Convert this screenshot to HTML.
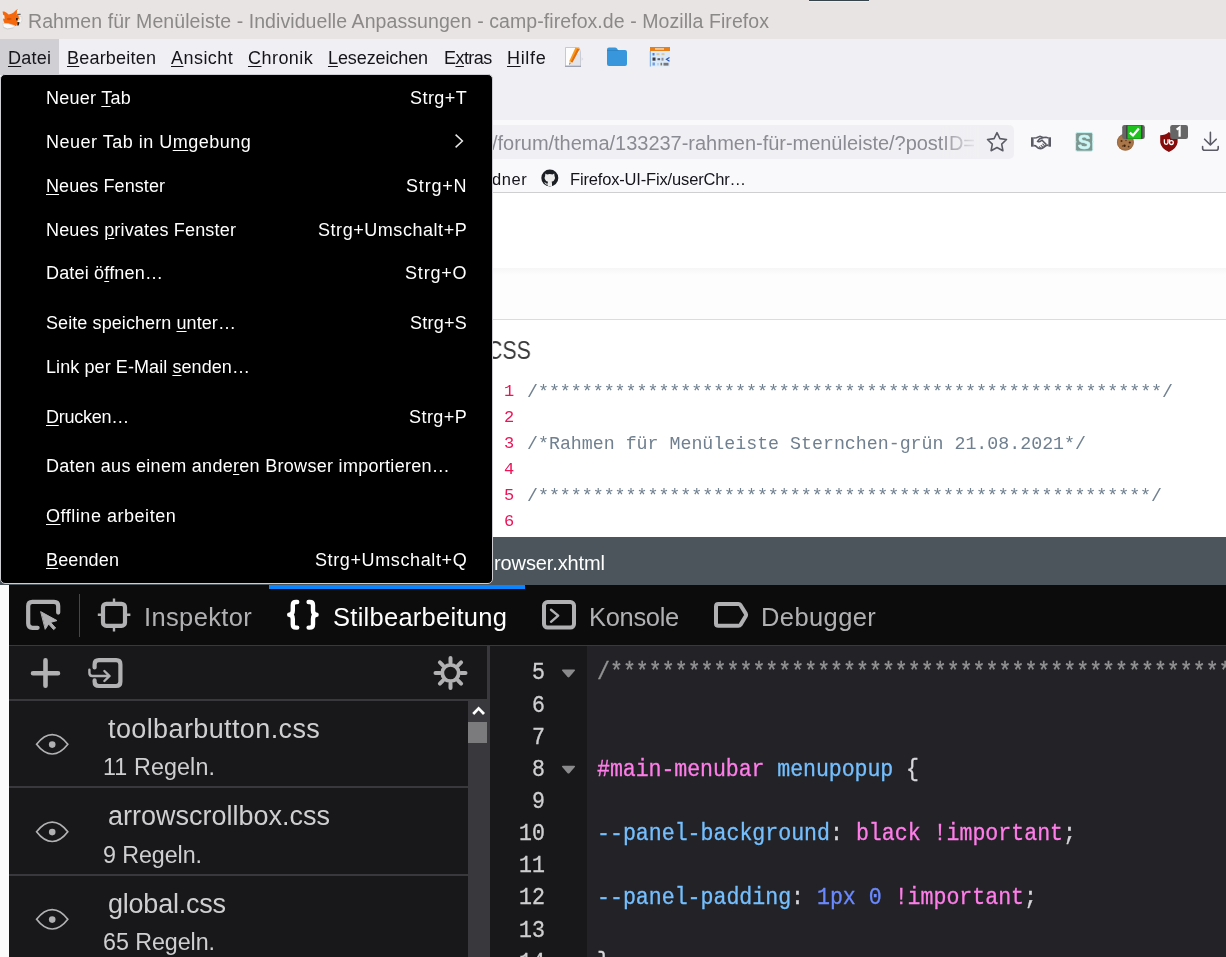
<!DOCTYPE html>
<html><head><meta charset="utf-8"><title>Firefox</title>
<style>
html,body{margin:0;padding:0;}
body{width:1226px;height:957px;overflow:hidden;position:relative;background:#fff;font-family:"Liberation Sans",sans-serif;}
.b{position:absolute;}
.t{position:absolute;white-space:pre;text-decoration-thickness:1px;will-change:transform;transform:translateZ(0);}
.t u{text-decoration-thickness:1.4px;text-underline-offset:2.2px;}
svg{position:absolute;overflow:visible;}
</style></head><body>
<!-- window chrome -->
<div class="b" style="left:0;top:0;width:1226px;height:39px;background:#e8e4e3;"></div>
<div class="b" style="left:809px;top:0;width:60px;height:1px;background:#37444b;"></div><div class="b" style="left:809px;top:1px;width:60px;height:1px;background:#f1f0ef;"></div>
<div class="b" style="left:0;top:39px;width:1226px;height:81px;background:#f0f0f4;"></div>
<div class="b" style="left:0;top:39px;width:59px;height:36px;background:#cfcfd4;"></div>
<div class="b" style="left:0;top:120px;width:1226px;height:72px;background:#f9f9fb;"></div>
<div class="b" style="left:300px;top:125px;width:714px;height:34px;background:#f0f0f4;border-radius:5px;"></div>
<div class="b" style="left:940px;top:126px;width:40px;height:32px;background:linear-gradient(90deg,rgba(240,240,244,0),#f0f0f4);z-index:5;"></div>
<div class="b" style="left:0;top:192px;width:1226px;height:1px;background:#cfcfd2;"></div>
<!-- page -->
<div class="b" style="left:0;top:193px;width:1226px;height:344px;background:#fff;"></div>
<div class="b" style="left:0;top:268px;width:1226px;height:51px;background:linear-gradient(#f6f6f6,#fdfdfd 7px,#fdfdfd);"></div>
<div class="b" style="left:0;top:319px;width:1226px;height:1px;background:#dcdcdc;"></div>
<!-- slate band -->
<div class="b" style="left:0;top:537px;width:1226px;height:48px;background:#4c555c;"></div>
<!-- devtools -->
<div class="b" style="left:0;top:585px;width:9px;height:372px;background:#fbfbfb;"></div>
<div class="b" style="left:9px;top:585px;width:1217px;height:60px;background:#0c0c0d;"></div>
<div class="b" style="left:269px;top:585px;width:256px;height:4.3px;background:#0a84ff;"></div>
<div class="b" style="left:9px;top:645px;width:1217px;height:2px;background:#38383d;"></div>
<div class="b" style="left:78.5px;top:594px;width:1.5px;height:43px;background:#46464b;"></div>
<!-- left pane -->
<div class="b" style="left:9px;top:646px;width:478px;height:311px;background:#18181a;"></div>
<div class="b" style="left:9px;top:699px;width:478px;height:2px;background:#38383d;"></div>
<div class="b" style="left:9px;top:786px;width:459px;height:1.5px;background:#38383d;"></div>
<div class="b" style="left:9px;top:874px;width:459px;height:1.5px;background:#38383d;"></div>
<!-- scrollbar -->
<div class="b" style="left:468px;top:700px;width:19px;height:257px;background:#38383d;"></div>
<div class="b" style="left:468px;top:722px;width:19px;height:21px;background:#7b7b7d;"></div>
<!-- splitter -->
<div class="b" style="left:487px;top:646px;width:3px;height:311px;background:#38383d;"></div>
<!-- editor -->
<div class="b" style="left:490px;top:646px;width:97px;height:311px;background:#18181a;"></div>
<div class="b" style="left:587px;top:646px;width:639px;height:311px;background:#232327;"></div>
<!-- popup -->
<div class="b" style="left:0;top:74px;width:493px;height:509.6px;background:#000;border:1px solid #cdcdd2;box-sizing:border-box;border-radius:5px;z-index:10;"></div>
<svg style="left:0;top:0;z-index:6;" width="1226" height="957" viewBox="0 0 1226 957" fill="none">
<!-- fox -->
<g>
<path d="M2.6,11.6 L4.2,11.4 L6.6,12.8 L8.6,14.4 L11.4,13.7 L13.6,12.4 L15.6,10.4 L17.6,8.9 L17.2,12 L16.6,14.6 L18.6,15.4 L19.6,18.6 L17.4,19.4 L17.6,22.4 L16.2,26 L12.4,25.4 L8,24 L4.6,23.6 L3.2,20 L3.4,16 Z" fill="#f5690c"/>
<path d="M16.9,10.2 L19.2,9.4 L19.6,14.2 L17,14.2 Z" fill="#f3f3f3"/>
<path d="M2.4,14.8 L4.4,15.6 L4.6,19 L2.6,18.2 Z" fill="#f1eeec"/>
<path d="M18.8,16.4 L21.8,16.8 L21.9,20.6 L20.4,23.4 L18.4,24.2 L17.6,21 L19.8,19.2 Z" fill="#f6f6f6" stroke="#cfcccb" stroke-width="0.6"/>
<path d="M2.8,23.4 L8,23.6 L14.6,25.6 L13.4,28 L7.4,29 L3.6,27.6 Z" fill="#fafafa" stroke="#d2cfce" stroke-width="0.6"/>
<path d="M3.4,27.4 L7.4,28.9 L13.2,27.9" stroke="#c9c9c9" stroke-width="0.7"/>
<path d="M16.1,17.9 L17.7,18 L17.6,20.4 L16.2,20.2 Z" fill="#101010"/>
<path d="M17.4,22 L19.6,22.2 L18.6,25.6 L17.2,25.4 Z" fill="#1c1c1c"/>
<path d="M17.2,14.3 L20.6,14.3" stroke="#2a2a2a" stroke-width="0.9"/>
<path d="M6.8,18.2 Q9.6,16.9 12,19 Q10,20.8 7,19.8 Z" fill="#d4560a"/>
</g>
<!-- notepad -->
<g>
<path d="M565.5,47.5 H579 L580.5,52 V66 H565.5 Z" fill="#fdfdfd" stroke="#b9bcc6" stroke-width="0.8"/>
<path d="M574,57 L580.3,51 V65.8 H569.6 Z" fill="#d9dbe3" opacity="0.75"/>
<path d="M565,66.3 H581" stroke="#8e93a3" stroke-width="1"/>
<path d="M575.5,47.5 L579.5,49 L572.2,62.5 L569.2,61.2 Z" fill="#f89a1c"/>
<path d="M577.6,48.2 L579.6,49 L572.4,62.5 L570.8,61.8 Z" fill="#e66a10"/>
<path d="M569.2,61.2 L572.2,62.5 L569.3,64.8 Z" fill="#e9c9a0"/>
<path d="M569.3,64.8 L569.5,63.2 L570.6,63.8 Z" fill="#444"/>
<path d="M581.5,57 L583.5,59 L581.5,61 Z" fill="#dcdce4"/>
</g>
<!-- folder -->
<path d="M607,49.5 Q607,47.5 609,47.5 H615 Q616.2,47.5 617,48.6 L618,50 H625 Q627,50 627,52 V64 Q627,66 625,66 H609 Q607,66 607,64 Z" fill="#3796dc"/>
<path d="M607,50.5 H618.5" stroke="#2f86c7" stroke-width="1"/>
<!-- calendar -->
<g>
<rect x="650" y="47" width="20" height="19.5" fill="#dcebfa"/>
<rect x="650" y="47" width="20" height="4" fill="#e8801a"/>
<rect x="655" y="48.3" width="9" height="1.3" fill="#fbe3c4"/>
<rect x="652.5" y="53" width="2" height="2.5" fill="#4a7fd6"/>
<rect x="656.5" y="53.2" width="3" height="2" fill="#d9c7a0"/>
<rect x="661.5" y="53.2" width="3" height="2" fill="#d9c7a0"/>
<rect x="652.5" y="57.5" width="3" height="3.2" fill="#3b3b44"/>
<rect x="657.5" y="58.2" width="2.6" height="2" fill="#5d5d66"/>
<rect x="661.5" y="57.8" width="2" height="2.8" fill="#8f8f98"/>
<path d="M669.5,57.5 L666.5,59.3 L669.5,61.2" stroke="#2b57b8" stroke-width="1.2"/>
<rect x="652.5" y="62.5" width="2.4" height="3" fill="#6f9fe0"/>
<rect x="657" y="63" width="2" height="2.4" fill="#b9d4f1"/>
<rect x="660.5" y="62.8" width="1.6" height="2.6" fill="#8a7a58"/>
<rect x="663.5" y="62.8" width="5" height="2.8" fill="#77777c"/>
<path d="M650.3,51 V66.5" stroke="#5f95dd" stroke-width="0.8"/>
</g>
<!-- star -->
<path d="M997,132.6 L999.9,138.6 L1006.5,139.5 L1001.7,144.1 L1002.9,150.7 L997,147.5 L991.1,150.7 L992.3,144.1 L987.5,139.5 L994.1,138.6 Z" stroke="#5b5b66" stroke-width="1.6" stroke-linejoin="round"/>
<!-- handshake -->
<g stroke="#5b5b66" fill="none">
<path d="M1032.3,137.3 V146.7" stroke-width="2.6"/>
<path d="M1049.7,137.3 V146.7" stroke-width="2.6"/>
<path d="M1033.5,138 L1036.5,137.8 L1040,136.3 L1043,137.6 L1046,137.2 L1048.5,138" stroke-width="1.6"/>
<path d="M1033.5,145.5 L1035.5,145.8 L1038.5,148.3 Q1041,149.3 1043,147.8 L1046.5,145.3 L1048.5,145.2" stroke-width="1.7"/>
<path d="M1043,137.6 L1039.5,139 L1037.6,141.3 Q1039.2,142.5 1041,140.9 L1042,140.3 L1046.4,144.6" stroke-width="1.5"/>
<path d="M1039,146.5 L1041,148.4 M1040.8,145.2 L1042.8,147.2 M1042.5,143.6 L1044.6,145.8" stroke-width="1.1"/>
</g>
<!-- stylus -->
<g>
<rect x="1075.6" y="132.6" width="17.2" height="18.6" rx="1.6" fill="#7e9791" stroke="#c6f3f1" stroke-width="1"/>
<path d="M1074.6,141.8 L1076.4,141.8 M1092,141.8 L1093.8,141.8" stroke="#c6f3f1" stroke-width="1.6"/>
<text x="1084.2" y="149" text-anchor="middle" font-family="'Liberation Sans',sans-serif" font-weight="bold" font-size="19.5" fill="#cdf7f6" stroke="#cdf7f6" stroke-width="0.5">S</text>
</g>
<!-- cookie -->
<g>
<circle cx="1125.4" cy="142.2" r="8.4" fill="#a9764a"/>
<circle cx="1125.4" cy="142.2" r="8" stroke="#98663c" stroke-width="0.8"/>
<circle cx="1121.5" cy="141" r="1" fill="#4a2c14"/><circle cx="1124.5" cy="145.8" r="1.2" fill="#3b220f"/>
<circle cx="1128.6" cy="146.6" r="0.9" fill="#4a2c14"/><circle cx="1129.8" cy="142.5" r="1.1" fill="#3b220f"/>
<circle cx="1122.5" cy="146" r="0.7" fill="#5a3518"/><circle cx="1126" cy="140.5" r="0.7" fill="#5a3518"/>
<rect x="1122.2" y="125" width="22.6" height="14" rx="2.2" fill="#666"/>
<rect x="1126.6" y="125.4" width="15.6" height="13.4" fill="#111"/>
<rect x="1127.3" y="125.4" width="14.2" height="13.4" fill="#1fc21f"/>
<path d="M1129.8,132.6 L1133,135.4 L1138.8,128.6" stroke="#fff" stroke-width="2.3"/>
</g>
<!-- ublock -->
<g>
<path d="M1160.2,135.2 Q1165.4,135.2 1168.9,132 Q1172.4,135.2 1177.6,135.2 L1177.6,142.6 Q1176.6,148.8 1168.9,152 Q1161.2,148.8 1160.2,142.6 Z" fill="#860b0b"/>
<path d="M1164.4,139.2 V142.6 Q1164.4,144.4 1166.2,144.4 Q1168,144.4 1168,142.6 V139.2" stroke="#fff" stroke-width="1.3"/>
<circle cx="1171.4" cy="142.6" r="1.9" stroke="#fff" stroke-width="1.3"/>
<path d="M1169.4,139.2 V142.6" stroke="#fff" stroke-width="1.1"/>
<rect x="1170.2" y="125" width="17.8" height="14" rx="2.2" fill="#666"/>
<path d="M1176.6,129.6 L1179.6,127.4 V136.8" stroke="#fff" stroke-width="2.2"/>
</g>
<!-- download -->
<g stroke="#5b5b66" stroke-width="1.6" stroke-linecap="round" stroke-linejoin="round">
<path d="M1210.4,132.4 V144.6 M1204.6,139.2 L1210.4,145 L1216.2,139.2"/>
<path d="M1202.6,146.6 V148.2 Q1202.6,150.2 1204.6,150.2 H1216.2 Q1218.2,150.2 1218.2,148.2 V146.6"/>
</g>
<!-- github -->
<g>
<circle cx="549.8" cy="178" r="8.5" fill="#1b1f23"/>
<path d="M545.4,173.6 L547,174.4 Q549.8,173.7 552.6,174.4 L554.2,173.6 L554.5,175.9 Q555.3,177.2 554.9,178.8 Q554.2,181.3 551.6,181.8 Q552,182.6 552,183.5 V186.2 H547.7 V184.6 Q545.6,185 544.9,183.2 L544.2,182.2 Q545.4,182.3 546,183.3 Q546.7,184 547.7,183.6 Q547.7,182.5 548.1,181.8 Q545.4,181.3 544.7,178.8 Q544.3,177.2 545.1,175.9 Z" fill="#ececec"/>
</g>

<!-- devtools icons -->
<g stroke="#b1b1b3" fill="none" stroke-linecap="round" stroke-linejoin="round">
<!-- picker -->
<path d="M37.6,627.8 H32.4 Q28.2,627.8 28.2,623.6 V606 Q28.2,601.8 32.4,601.8 H54 Q58.2,601.8 58.2,606 V612.6" stroke-width="4.2"/>
<path d="M41,611.8 L57,620.6 L50.6,622.4 L55.6,628 L53.6,629.6 L48.6,624 L45.4,629 Z" fill="#b1b1b3" stroke-width="1"/>
<!-- inspector -->
<rect x="103" y="603.8" width="22" height="22" rx="3.4" stroke-width="4.2"/>
<path d="M114,598.4 V602 M114,628 V631.6 M97.8,614.8 H101 M127,614.8 H130.4" stroke-width="2.4" stroke-linecap="butt"/>
<!-- console -->
<rect x="544" y="602" width="30" height="25.6" rx="3.6" stroke-width="4"/>
<path d="M551,609.8 L558.2,615.6 L551,621.8" stroke-width="2.4"/>
<!-- debugger -->
<path d="M718.4,604 H738.4 Q739.8,604 740.6,605.2 L745.8,613.6 Q746.4,614.8 745.8,616 L740.6,624.6 Q739.8,625.8 738.4,625.8 H718.4 Q716,625.8 716,623.4 V606.4 Q716,604 718.4,604 Z" stroke-width="4"/>
<!-- plus -->
<path d="M33,673.2 H58 M45.5,660.4 V685.8" stroke-width="4.6"/>
<!-- import -->
<path d="M94.6,667.4 V664.4 Q94.6,660.2 98.8,660.2 H116.2 Q120.4,660.2 120.4,664.4 V681.8 Q120.4,686 116.2,686 H98.8 Q94.6,686 94.6,681.8 V680.4" stroke-width="4.2"/>
<path d="M89.4,669.8 V673 Q89.4,676 92.4,676 H109 M104.4,671 L109.6,676 L104.4,681" stroke-width="2.4"/>
<!-- gear -->
<circle cx="450.5" cy="673" r="8.2" stroke-width="3.8"/>
<path d="M450.5,658 V662.6 M450.5,683.4 V688 M435.5,673 H440.1 M460.9,673 H465.5 M439.9,662.4 L443.1,665.6 M457.9,680.4 L461.1,683.6 M439.9,683.6 L443.1,680.4 M457.9,665.6 L461.1,662.4" stroke-width="4"/>
</g>
<!-- braces (white) -->
<g stroke="#fff" stroke-width="4.4" fill="none" stroke-linecap="round" stroke-linejoin="round">
<path d="M297.2,602 H296 Q292.8,602 292.8,605.2 V610.6 Q292.8,614.8 289.2,614.8 Q292.8,614.8 292.8,619 V624.4 Q292.8,627.6 296,627.6 H297.2"/>
<path d="M308.6,602 H309.8 Q313,602 313,605.2 V610.6 Q313,614.8 316.6,614.8 Q313,614.8 313,619 V624.4 Q313,627.6 309.8,627.6 H308.6"/>
</g>
<!-- eyes -->
<g stroke="#b1b1b3" stroke-width="1.7" fill="none">
<path d="M36.6,744.3 Q44,734.6 52.2,734.6 Q60.4,734.6 67.8,744.3 Q60.4,754 52.2,754 Q44,754 36.6,744.3 Z"/>
<path d="M36.6,831.8 Q44,822.1 52.2,822.1 Q60.4,822.1 67.8,831.8 Q60.4,841.5 52.2,841.5 Q44,841.5 36.6,831.8 Z"/>
<path d="M36.6,919.3 Q44,909.6 52.2,909.6 Q60.4,909.6 67.8,919.3 Q60.4,929 52.2,929 Q44,929 36.6,919.3 Z"/>
</g>
<circle cx="52.2" cy="744.6" r="3.3" fill="#b1b1b3"/>
<circle cx="52.2" cy="832.1" r="3.3" fill="#b1b1b3"/>
<circle cx="52.2" cy="919.6" r="3.3" fill="#b1b1b3"/>
<!-- scroll arrow -->
<path d="M473.2,714 L478.6,708.4 L484,714" stroke="#fff" stroke-width="2.8" fill="none"/>
<!-- fold triangles -->
<path d="M562.6,669.6 H574.4 Q575.6,669.8 574.8,670.8 L569.4,677 Q568.5,677.8 567.6,677 L562.2,670.8 Q561.4,669.8 562.6,669.6 Z" fill="#8a8a8c"/>
<path d="M562.6,765.8 H574.4 Q575.6,766 574.8,767 L569.4,773.2 Q568.5,774 567.6,773.2 L562.2,767 Q561.4,766 562.6,765.8 Z" fill="#8a8a8c"/>
</svg>
<!-- submenu arrow -->
<svg style="left:452px;top:131px;z-index:20;" width="14" height="20" viewBox="0 0 14 20" fill="none"><path d="M3.6,3.6 L10.4,10 L3.6,16.4" stroke="#e8e8e8" stroke-width="1.5"/></svg>

<span class="t" style="left:28px;top:8.5px;font:19.5px/25px 'Liberation Sans', sans-serif;color:#8b8888;letter-spacing:0.074px;">Rahmen für Menüleiste - Individuelle Anpassungen - camp-firefox.de - Mozilla Firefox</span>
<span class="t" style="left:8px;top:46.5px;font:18px/23px 'Liberation Sans', sans-serif;color:#15141a;letter-spacing:0.215px;"><u>D</u>atei</span>
<span class="t" style="left:67px;top:46.5px;font:18px/23px 'Liberation Sans', sans-serif;color:#15141a;letter-spacing:0.202px;"><u>B</u>earbeiten</span>
<span class="t" style="left:171px;top:46.5px;font:18px/23px 'Liberation Sans', sans-serif;color:#15141a;letter-spacing:0.454px;"><u>A</u>nsicht</span>
<span class="t" style="left:248px;top:46.5px;font:18px/23px 'Liberation Sans', sans-serif;color:#15141a;letter-spacing:0.457px;"><u>C</u>hronik</span>
<span class="t" style="left:328px;top:46.5px;font:18px/23px 'Liberation Sans', sans-serif;color:#15141a;letter-spacing:-0.104px;"><u>L</u>esezeichen</span>
<span class="t" style="left:444px;top:46.5px;font:18px/23px 'Liberation Sans', sans-serif;color:#15141a;letter-spacing:-0.551px;">E<u>x</u>tras</span>
<span class="t" style="left:507px;top:46.5px;font:18px/23px 'Liberation Sans', sans-serif;color:#15141a;letter-spacing:0.663px;"><u>H</u>ilfe</span>
<span class="t" style="left:46px;top:86.5px;font:18px/23px 'Liberation Sans', sans-serif;color:#ffffff;letter-spacing:0.267px;z-index:20;">Neuer <u>T</u>ab</span>
<span class="t" style="left:46px;top:130.5px;font:18px/23px 'Liberation Sans', sans-serif;color:#ffffff;letter-spacing:0.497px;z-index:20;">Neuer Tab in U<u>m</u>gebung</span>
<span class="t" style="left:46px;top:174.5px;font:18px/23px 'Liberation Sans', sans-serif;color:#ffffff;letter-spacing:0.075px;z-index:20;"><u>N</u>eues Fenster</span>
<span class="t" style="left:46px;top:218.5px;font:18px/23px 'Liberation Sans', sans-serif;color:#ffffff;letter-spacing:0.181px;z-index:20;">Neues <u>p</u>rivates Fenster</span>
<span class="t" style="left:46px;top:261.5px;font:18px/23px 'Liberation Sans', sans-serif;color:#ffffff;letter-spacing:0.177px;z-index:20;">Datei ö<u>f</u>fnen…</span>
<span class="t" style="left:46px;top:311.5px;font:18px/23px 'Liberation Sans', sans-serif;color:#ffffff;letter-spacing:0.087px;z-index:20;">Seite speichern <u>u</u>nter…</span>
<span class="t" style="left:46px;top:355.5px;font:18px/23px 'Liberation Sans', sans-serif;color:#ffffff;letter-spacing:0.084px;z-index:20;">Link per E-Mail <u>s</u>enden…</span>
<span class="t" style="left:46px;top:405.5px;font:18px/23px 'Liberation Sans', sans-serif;color:#ffffff;letter-spacing:-0.271px;z-index:20;"><u>D</u>rucken…</span>
<span class="t" style="left:46px;top:454.5px;font:18px/23px 'Liberation Sans', sans-serif;color:#ffffff;letter-spacing:0.294px;z-index:20;">Daten aus einem ande<u>r</u>en Browser importieren…</span>
<span class="t" style="left:46px;top:504.5px;font:18px/23px 'Liberation Sans', sans-serif;color:#ffffff;letter-spacing:0.531px;z-index:20;"><u>O</u>ffline arbeiten</span>
<span class="t" style="left:46px;top:548.5px;font:18px/23px 'Liberation Sans', sans-serif;color:#ffffff;letter-spacing:0.139px;z-index:20;"><u>B</u>eenden</span>
<span class="t" style="left:410px;top:86.5px;font:18px/23px 'Liberation Sans', sans-serif;color:#ffffff;letter-spacing:0.449px;z-index:20;">Strg+T</span>
<span class="t" style="left:406px;top:174.5px;font:18px/23px 'Liberation Sans', sans-serif;color:#ffffff;letter-spacing:0.812px;z-index:20;">Strg+N</span>
<span class="t" style="left:318px;top:218.5px;font:18px/23px 'Liberation Sans', sans-serif;color:#ffffff;letter-spacing:0.547px;z-index:20;">Strg+Umschalt+P</span>
<span class="t" style="left:405px;top:261.5px;font:18px/23px 'Liberation Sans', sans-serif;color:#ffffff;letter-spacing:0.812px;z-index:20;">Strg+O</span>
<span class="t" style="left:410px;top:311.5px;font:18px/23px 'Liberation Sans', sans-serif;color:#ffffff;letter-spacing:0.267px;z-index:20;">Strg+S</span>
<span class="t" style="left:409px;top:405.5px;font:18px/23px 'Liberation Sans', sans-serif;color:#ffffff;letter-spacing:0.449px;z-index:20;">Strg+P</span>
<span class="t" style="left:315px;top:548.5px;font:18px/23px 'Liberation Sans', sans-serif;color:#ffffff;letter-spacing:0.616px;z-index:20;">Strg+Umschalt+Q</span>
<span class="t" style="left:492px;top:130.0px;font:20px/26px 'Liberation Sans', sans-serif;color:#8b8b93;letter-spacing:-0.023px;">/forum/thema/133237-rahmen-für-menüleiste/?postID=</span>
<span class="t" style="left:492px;top:168.5px;font:16.5px/21px 'Liberation Sans', sans-serif;color:#15141a;letter-spacing:0.562px;">dner</span>
<span class="t" style="left:570px;top:168.5px;font:16.5px/21px 'Liberation Sans', sans-serif;color:#15141a;letter-spacing:-0.164px;">Firefox-UI-Fix/userChr…</span>
<span class="t" style="left:487px;top:333.5px;font:25.5px/33px 'Liberation Sans', sans-serif;color:#3a3a3a;letter-spacing:0.000px;transform:translateZ(0) scaleX(0.835);transform-origin:0 50%;">CSS</span>
<span class="t" style="left:504px;top:380.5px;font:17px/22px 'Liberation Mono', monospace;color:#ec1357;letter-spacing:0.000px;">1</span>
<span class="t" style="left:504px;top:406.5px;font:17px/22px 'Liberation Mono', monospace;color:#ec1357;letter-spacing:0.000px;">2</span>
<span class="t" style="left:504px;top:432.5px;font:17px/22px 'Liberation Mono', monospace;color:#ec1357;letter-spacing:0.000px;">3</span>
<span class="t" style="left:504px;top:458.5px;font:17px/22px 'Liberation Mono', monospace;color:#ec1357;letter-spacing:0.000px;">4</span>
<span class="t" style="left:504px;top:484.5px;font:17px/22px 'Liberation Mono', monospace;color:#ec1357;letter-spacing:0.000px;">5</span>
<span class="t" style="left:504px;top:510.5px;font:17px/22px 'Liberation Mono', monospace;color:#ec1357;letter-spacing:0.000px;">6</span>
<span class="t" style="left:527px;top:379.5px;font:18.27px/24px 'Liberation Mono', monospace;color:#708090;letter-spacing:-0.012px;">/*********************************************************/</span>
<span class="t" style="left:527px;top:431.5px;font:18.27px/24px 'Liberation Mono', monospace;color:#708090;letter-spacing:-0.001px;">/*Rahmen für Menüleiste Sternchen-grün 21.08.2021*/</span>
<span class="t" style="left:527px;top:483.5px;font:18.27px/24px 'Liberation Mono', monospace;color:#708090;letter-spacing:-0.013px;">/********************************************************/</span>
<span class="t" style="left:494px;top:550.0px;font:20px/26px 'Liberation Sans', sans-serif;color:#ffffff;letter-spacing:-0.109px;">rowser.xhtml</span>
<span class="t" style="left:144px;top:600.5px;font:25.5px/33px 'Liberation Sans', sans-serif;color:#b1b1b3;letter-spacing:0.366px;">Inspektor</span>
<span class="t" style="left:333px;top:600.5px;font:25.5px/33px 'Liberation Sans', sans-serif;color:#ffffff;letter-spacing:0.267px;">Stilbearbeitung</span>
<span class="t" style="left:589px;top:600.5px;font:25.5px/33px 'Liberation Sans', sans-serif;color:#b1b1b3;letter-spacing:-0.332px;">Konsole</span>
<span class="t" style="left:761px;top:600.5px;font:25.5px/33px 'Liberation Sans', sans-serif;color:#b1b1b3;letter-spacing:0.400px;">Debugger</span>
<span class="t" style="left:108px;top:711.5px;font:27px/35px 'Liberation Sans', sans-serif;color:#cfcfd2;letter-spacing:0.386px;">toolbarbutton.css</span>
<span class="t" style="left:103px;top:751.5px;font:23.3px/30px 'Liberation Sans', sans-serif;color:#cfcfd2;letter-spacing:0.109px;">11 Regeln.</span>
<span class="t" style="left:108px;top:798.5px;font:27px/35px 'Liberation Sans', sans-serif;color:#cfcfd2;letter-spacing:-0.004px;">arrowscrollbox.css</span>
<span class="t" style="left:103px;top:840.0px;font:23.3px/30px 'Liberation Sans', sans-serif;color:#cfcfd2;letter-spacing:-0.086px;">9 Regeln.</span>
<span class="t" style="left:108px;top:886.5px;font:27px/35px 'Liberation Sans', sans-serif;color:#cfcfd2;letter-spacing:-0.219px;">global.css</span>
<span class="t" style="left:103px;top:926.5px;font:23.3px/30px 'Liberation Sans', sans-serif;color:#cfcfd2;letter-spacing:-0.072px;">65 Regeln.</span>
<span class="t" style="left:532px;top:658.6px;font:21.6px/28px 'Liberation Mono', monospace;color:#cfcfd1;letter-spacing:0.000px;transform:translateZ(0) scaleY(1.07);-webkit-text-stroke:0.3px currentColor;">5</span>
<span class="t" style="left:532px;top:691.6px;font:21.6px/28px 'Liberation Mono', monospace;color:#cfcfd1;letter-spacing:0.000px;transform:translateZ(0) scaleY(1.07);-webkit-text-stroke:0.3px currentColor;">6</span>
<span class="t" style="left:532px;top:723.6px;font:21.6px/28px 'Liberation Mono', monospace;color:#cfcfd1;letter-spacing:0.000px;transform:translateZ(0) scaleY(1.07);-webkit-text-stroke:0.3px currentColor;">7</span>
<span class="t" style="left:532px;top:755.6px;font:21.6px/28px 'Liberation Mono', monospace;color:#cfcfd1;letter-spacing:0.000px;transform:translateZ(0) scaleY(1.07);-webkit-text-stroke:0.3px currentColor;">8</span>
<span class="t" style="left:532px;top:787.6px;font:21.6px/28px 'Liberation Mono', monospace;color:#cfcfd1;letter-spacing:0.000px;transform:translateZ(0) scaleY(1.07);-webkit-text-stroke:0.3px currentColor;">9</span>
<span class="t" style="left:519px;top:819.6px;font:21.6px/28px 'Liberation Mono', monospace;color:#cfcfd1;letter-spacing:0.052px;transform:translateZ(0) scaleY(1.07);-webkit-text-stroke:0.3px currentColor;">10</span>
<span class="t" style="left:519px;top:851.6px;font:21.6px/28px 'Liberation Mono', monospace;color:#cfcfd1;letter-spacing:0.052px;transform:translateZ(0) scaleY(1.07);-webkit-text-stroke:0.3px currentColor;">11</span>
<span class="t" style="left:519px;top:883.6px;font:21.6px/28px 'Liberation Mono', monospace;color:#cfcfd1;letter-spacing:0.052px;transform:translateZ(0) scaleY(1.07);-webkit-text-stroke:0.3px currentColor;">12</span>
<span class="t" style="left:519px;top:916.6px;font:21.6px/28px 'Liberation Mono', monospace;color:#cfcfd1;letter-spacing:0.052px;transform:translateZ(0) scaleY(1.07);-webkit-text-stroke:0.3px currentColor;">13</span>
<span class="t" style="left:519px;top:948.6px;font:21.6px/28px 'Liberation Mono', monospace;color:#cfcfd1;letter-spacing:0.052px;transform:translateZ(0) scaleY(1.07);-webkit-text-stroke:0.3px currentColor;">14</span>
<span class="t" style="left:597px;top:658.6px;font:21.58px/28px 'Liberation Mono', monospace;color:#939395;letter-spacing:0.002px;transform:translateZ(0) scaleY(1.07);-webkit-text-stroke:0.3px currentColor;">/************************************************************</span>
<span class="t" style="left:597px;top:755.6px;font:21.58px/28px 'Liberation Mono', monospace;color:#d7d7db;letter-spacing:-0.071px;transform:translateZ(0) scaleY(1.07);-webkit-text-stroke:0.3px currentColor;"><span style="color:#ff7de9">#main-menubar</span> <span style="color:#75bfff">menupopup</span> {</span>
<span class="t" style="left:597px;top:819.6px;font:21.58px/28px 'Liberation Mono', monospace;color:#d7d7db;letter-spacing:-0.004px;transform:translateZ(0) scaleY(1.07);-webkit-text-stroke:0.3px currentColor;"><span style="color:#75bfff">--panel-background</span>: <span style="color:#ff7de9">black</span> <span style="color:#ff7de9">!important</span>;</span>
<span class="t" style="left:597px;top:883.6px;font:21.58px/28px 'Liberation Mono', monospace;color:#d7d7db;letter-spacing:-0.010px;transform:translateZ(0) scaleY(1.07);-webkit-text-stroke:0.3px currentColor;"><span style="color:#75bfff">--panel-padding</span>: <span style="color:#6b89ff">1px</span> <span style="color:#6b89ff">0</span> <span style="color:#ff7de9">!important</span>;</span>
<span class="t" style="left:597px;top:948.6px;font:21.58px/28px 'Liberation Mono', monospace;color:#d7d7db;letter-spacing:0.000px;transform:translateZ(0) scaleY(1.07);-webkit-text-stroke:0.3px currentColor;">}</span>
</body></html>
